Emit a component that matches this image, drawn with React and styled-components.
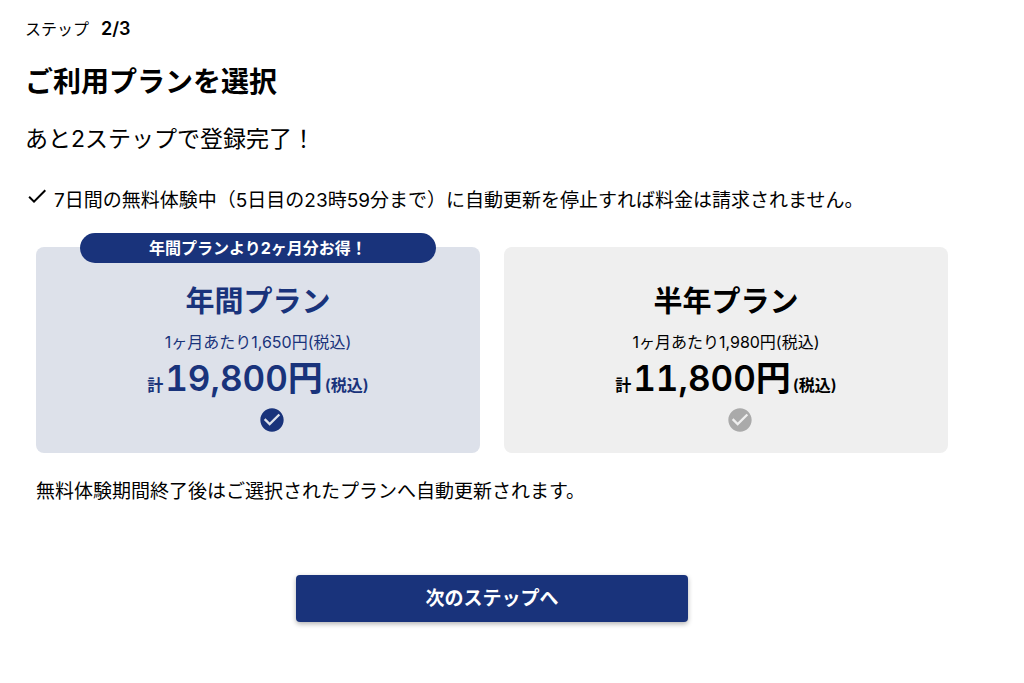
import React from 'react'
import styled, { createGlobalStyle } from 'styled-components'

const planList = [
  {
    id: 'year',
    name: '年間プラン',
    monthly: '1ヶ月あたり1,650円(税込)',
    total: '19,800円',
    banner: '年間プランより2ヶ月分お得！',
  },
  {
    id: 'half',
    name: '半年プラン',
    monthly: '1ヶ月あたり1,980円(税込)',
    total: '11,800円',
  },
]

const CheckIcon = () => (
  <CheckSvg viewBox="0 0 24 24" aria-hidden="true">
    <path d="M9 16.17 4.83 12l-1.42 1.41L9 19 21 7l-1.41-1.41z" />
  </CheckSvg>
)

const CheckCircleIcon = () => (
  <svg viewBox="0 0 24 24" width="28" height="28" fill="currentColor" aria-hidden="true">
    <path d="M12 2C6.48 2 2 6.48 2 12s4.48 10 10 10 10-4.48 10-10S17.52 2 12 2zm-2 15-5-5 1.41-1.41L10 14.17l7.59-7.59L19 8l-9 9z" />
  </svg>
)

const App = () => {
  const [plan, setPlan] = React.useState('year')

  return (
    <Container>
      <GlobalStyle />
      <Step>
        ステップ<StepNo>2/3</StepNo>
      </Step>
      <Title>ご利用プランを選択</Title>
      <SubTitle>あと2ステップで登録完了！</SubTitle>
      <Note>
        <CheckIcon />
        7日間の無料体験中（5日目の23時59分まで）に自動更新を停止すれば料金は請求されません。
      </Note>
      <PlanGroup role="radiogroup" aria-label="ご利用プラン">
        {planList.map((e) => (
          <PlanCard key={e.id} $selected={plan === e.id}>
            {e.banner && <Banner>{e.banner}</Banner>}
            <PlanName>{e.name}</PlanName>
            <Monthly>{e.monthly}</Monthly>
            <Price>
              計<Amount>{e.total}</Amount>(税込)
            </Price>
            <RadioMark $selected={plan === e.id}>
              <RadioInput
                type="radio"
                name="plan"
                value={e.id}
                checked={plan === e.id}
                onChange={() => setPlan(e.id)}
              />
              <CheckCircleIcon />
            </RadioMark>
          </PlanCard>
        ))}
      </PlanGroup>
      <Renewal>無料体験期間終了後はご選択されたプランへ自動更新されます。</Renewal>
      <NextButton type="button">次のステップへ</NextButton>
    </Container>
  )
}

export default App

const GlobalStyle = createGlobalStyle`
  * {
    box-sizing: border-box;
  }
  body {
    margin: 0;
    background-color: #fff;
    color: #000;
    font-family: Inter, 'Noto Sans CJK JP', sans-serif;
  }
`

const Container = styled.main`
  display: flex;
  flex-direction: column;
  max-width: 1024px;
  padding: 17px 65px 48px 25px;
`

const Step = styled.p`
  display: flex;
  gap: 12px;
  margin: 0;
  font-size: 16px;
  line-height: 24px;
`

const StepNo = styled.span`
  font-size: 18px;
  font-weight: 600;
`

const Title = styled.h1`
  margin: 21px 0 0;
  font-size: 28px;
  font-weight: 700;
  line-height: 40px;
`

const SubTitle = styled.p`
  margin: 21px 0 0;
  font-size: 23px;
  line-height: 32px;
`

const Note = styled.p`
  display: flex;
  gap: 5px;
  margin: 29px 0 0;
  font-size: 19px;
  line-height: 34px;
`

const CheckSvg = styled.svg`
  flex: none;
  width: 24px;
  height: 24px;
  fill: currentColor;
`

const PlanGroup = styled.div`
  display: grid;
  grid-template-columns: 1fr 1fr;
  gap: 24px;
  margin-top: 29px;
  padding: 0 11px;
`

const PlanCard = styled.label`
  position: relative;
  display: flex;
  flex-direction: column;
  align-items: center;
  padding: 35px 16px 19px;
  border-radius: 8px;
  background-color: ${(props) => (props.$selected ? '#dde1ea' : '#efefef')};
  color: ${(props) => (props.$selected ? '#19337b' : '#000')};
  cursor: pointer;
`

/* sits on the top edge of the card */
const Banner = styled.span`
  position: absolute;
  top: -14px;
  left: 10%;
  width: 80%;
  border-radius: 15px;
  background-color: #19337b;
  color: #fff;
  font-size: 16px;
  font-weight: 700;
  line-height: 30px;
  text-align: center;
`

const PlanName = styled.span`
  font-size: 29px;
  font-weight: 700;
  line-height: 40px;
`

const Monthly = styled.span`
  margin-top: 8px;
  font-size: 16px;
  line-height: 24px;
`

const Price = styled.span`
  display: flex;
  align-items: baseline;
  gap: 2px;
  margin-top: 4px;
  font-size: 16px;
  font-weight: 600;
  line-height: 40px;
`

const Amount = styled.span`
  font-size: 35px;
  font-variant-numeric: tabular-nums;
`

const RadioMark = styled.span`
  position: relative;
  display: flex;
  margin: 1px 0 0 28px;
  color: ${(props) => (props.$selected ? '#19337b' : '#aaa')};
`

const RadioInput = styled.input`
  position: absolute;
  inset: 0;
  width: 100%;
  height: 100%;
  margin: 0;
  opacity: 0;
  cursor: pointer;
`

const Renewal = styled.p`
  margin: 25px 11px 0;
  font-size: 19px;
  line-height: 28px;
`

const NextButton = styled.button`
  align-self: center;
  width: 42%;
  margin-top: 69px;
  padding: 10px 16px;
  border: 0;
  border-radius: 4px;
  background-color: #19337b;
  box-shadow: 0 2px 5px rgba(0, 0, 0, 0.3);
  color: #fff;
  font-family: inherit;
  font-size: 19px;
  font-weight: 700;
  line-height: 27px;
  cursor: pointer;
`
